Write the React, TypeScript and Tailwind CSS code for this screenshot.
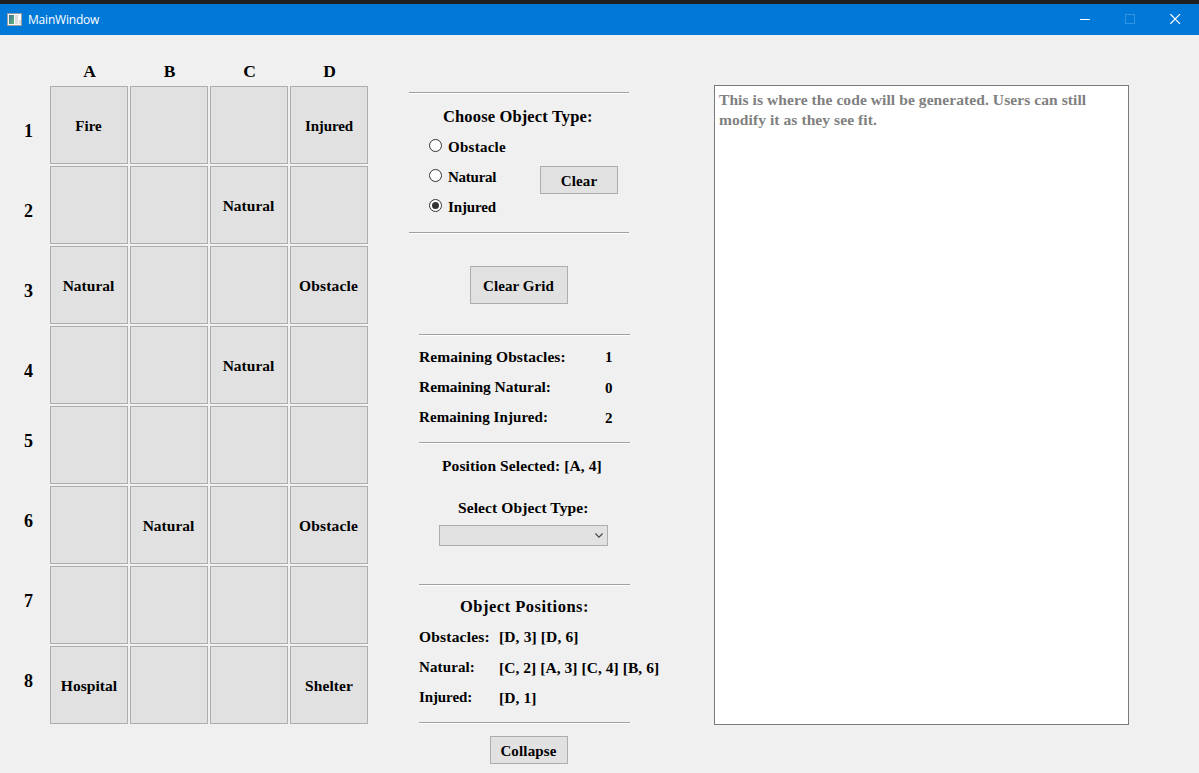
import React from "react";

const COLUMNS = ["A", "B", "C", "D"];

type Cell = { text: string; style: string } | null;

const fire: Cell = { text: "Fire", style: "pr-px text-[15px]" };
const injured: Cell = { text: "Injured", style: "text-[15px] tracking-[-0.1px]" };
const natural: Cell = { text: "Natural", style: "pr-px text-[15.5px]" };
const obstacle: Cell = { text: "Obstacle", style: "pr-px text-[15.5px] tracking-[0.15px]" };
const hospital: Cell = { text: "Hospital", style: "text-[15.5px] tracking-[0.06px]" };
const shelter: Cell = { text: "Shelter", style: "text-[15.5px] tracking-[0.06px]" };

const GRID: Cell[][] = [
  [fire, null, null, injured],
  [null, null, natural, null],
  [natural, null, null, obstacle],
  [null, null, natural, null],
  [null, null, null, null],
  [null, natural, null, obstacle],
  [null, null, null, null],
  [hospital, null, null, shelter],
];

function Divider({ className }: { className: string }) {
  return <div className={`h-[2px] shrink-0 border-t border-[#a0a0a0] bg-white ${className}`} />;
}

function Button({ className, children }: { className: string; children?: React.ReactNode }) {
  return (
    <button
      className={`flex shrink-0 items-center justify-center whitespace-nowrap border border-[#adadad] bg-[#e1e1e1] font-bold ${className}`}
    >
      {children}
    </button>
  );
}

function Radio({ label, checked, tracking }: { label: string; checked?: boolean; tracking: string }) {
  return (
    <label className="flex h-[30px] items-start pl-[20px]">
      <svg className="mt-[7px] shrink-0" width="13" height="13" viewBox="0 0 13 13">
        <circle cx="6.5" cy="6.5" r="6" fill="#fff" stroke="#333" />
        {checked && <circle cx="6.5" cy="6.5" r="3.5" fill="#333" />}
      </svg>
      <span className={`ml-[6px] mt-[5px] ${tracking}`}>{label}</span>
    </label>
  );
}

function Count({ label, value, style, shift }: { label: string; value: number; style: string; shift: string }) {
  return (
    <div className="flex h-[30px] items-start pt-[5px]">
      <span className={`w-[186px] ${style}`}>{label}</span>
      <span className={shift}>{value}</span>
    </div>
  );
}

function Positions({ label, value, style, valueClass }: { label: string; value: string; style: string; valueClass: string }) {
  return (
    <div className="flex h-[30px] items-start whitespace-nowrap pt-[5px]">
      <span className={`w-[80px] shrink-0 ${style}`}>{label}</span>
      <span className={valueClass}>{value}</span>
    </div>
  );
}

function TitleBar() {
  return (
    <header className="flex h-[35px] shrink-0 items-center border-t-4 border-[#202020] bg-[#0078d7] text-white">
      <svg className="mb-px ml-[7px]" width="15" height="13" viewBox="0 0 15 13">
        <defs>
          <linearGradient id="pane" x1="0" y1="0" x2="1" y2="1">
            <stop offset="0" stopColor="#3b7398" />
            <stop offset="1" stopColor="#63b573" />
          </linearGradient>
        </defs>
        <rect width="15" height="13" fill="#9aa0a2" />
        <rect x="1" y="1" width="13" height="11" fill="#f4f4f4" />
        <rect x="2" y="2" width="5" height="9" fill="url(#pane)" />
        <rect x="8" y="2" width="3" height="9" fill="#dedede" />
        <rect x="12" y="2" width="2" height="5" fill="#fff" />
        <rect x="12" y="7" width="2" height="4" fill="#dcdcdc" />
      </svg>
      <span className="ml-[6px] font-['Open_Sans','Noto_Sans',sans-serif] text-[12px] font-normal leading-[16px] tracking-[-0.2px]">
        MainWindow
      </span>
      <div className="mb-px ml-auto mr-[18px] flex gap-[35px]">
        <svg width="10" height="10" viewBox="0 0 10 10" shapeRendering="crispEdges">
          <path d="M0 5.5H10" stroke="#fff" />
        </svg>
        <svg width="10" height="10" viewBox="0 0 10 10">
          <rect x="0.5" y="0.5" width="9" height="9" fill="none" stroke="#3393df" />
        </svg>
        <svg width="11" height="10" viewBox="0 0 11 10">
          <path d="M0.4 0.2L10 9.8M10 0.2L0.4 9.8" stroke="#fff" strokeWidth="1.2" />
        </svg>
      </div>
    </header>
  );
}

function Board() {
  return (
    <section className="w-[368px] shrink-0 pt-[26px]">
      <div className="flex h-[25px] gap-[2px] pl-[50px] text-[17.5px] leading-[20px]">
        {COLUMNS.map((name) => (
          <div key={name} className="w-[78px] pl-px text-center">
            {name}
          </div>
        ))}
      </div>
      <div className="flex flex-col gap-[2px]">
        {GRID.map((row, r) => (
          <div key={r} className="flex h-[78px] gap-[2px]">
            <div
              className={`w-[48px] pl-[24px] text-[18px] leading-[20px] ${r < 4 ? "pt-[35px]" : "pt-[25px]"}`}
            >
              {r + 1}
            </div>
            {row.map((cell, c) => (
              <Button key={c} className={`h-[78px] w-[78px] pt-px ${cell ? cell.style : ""}`}>
                {cell ? cell.text : null}
              </Button>
            ))}
          </div>
        ))}
      </div>
    </section>
  );
}

function Controls() {
  return (
    <section className="ml-[41px] flex w-[305px] shrink-0 flex-col pt-[57px]">
      <Divider className="w-[220px]" />
      <div className="h-[138px] pt-[8px]">
        <h2 className="h-[30px] pl-[34px] pt-[5px] text-[16.5px] leading-[20px] tracking-[0.14px]">
          Choose Object Type:
        </h2>
        <div className="flex">
          <div className="w-[131px]">
            <Radio label="Obstacle" tracking="tracking-[0.26px]" />
            <Radio label="Natural" tracking="tracking-[-0.25px]" />
            <Radio label="Injured" checked tracking="tracking-[-0.15px]" />
          </div>
          <Button className="mt-[34px] h-[28px] w-[78px] pt-[2px] tracking-[0.1px]">Clear</Button>
        </div>
      </div>
      <Divider className="w-[220px]" />

      <Button className="ml-[61px] mt-[32px] h-[38px] w-[98px] pr-px pt-[2px] tracking-[0.08px]">Clear Grid</Button>

      <div className="ml-[10px] mt-[30px]">
        <Divider className="w-[211px]" />
        <div className="h-[106px] pt-[6px]">
          <Count label="Remaining Obstacles:" value={1} style="text-[15.5px] tracking-[0.08px]" shift="" />
          <Count label="Remaining Natural:" value={0} style="text-[15.5px] tracking-[-0.06px]" shift="pt-px" />
          <Count label="Remaining Injured:" value={2} style="text-[15px] tracking-[0.08px]" shift="pt-px" />
        </div>
        <Divider className="w-[211px]" />
        <div className="h-[140px] pt-[12px]">
          <div className="h-[42px] pl-[23px] text-[15.5px] tracking-[0.09px]">Position Selected: [A, 4]</div>
          <div className="h-[27px] pl-[39px] text-[15.5px] tracking-[0.1px]">Select Object Type:</div>
          <div className="ml-[20px] flex h-[21px] w-[169px] items-center justify-end border border-[#adadad] bg-[#e1e1e1] pr-[4px]">
            <svg width="8" height="5" viewBox="0 0 8 5">
              <path d="M0.4 0.5L4 4.1L7.6 0.5" fill="none" stroke="#444" strokeWidth="1.1" />
            </svg>
          </div>
        </div>
        <Divider className="w-[211px]" />
        <div className="h-[136px] pt-[6px]">
          <h2 className="h-[30px] pl-[41px] pt-[5px] text-[16.5px] leading-[20px] tracking-[0.5px]">
            Object Positions:
          </h2>
          <Positions
            label="Obstacles:"
            value="[D, 3] [D, 6]"
            style="text-[15.5px] tracking-[0.2px]"
            valueClass="text-[15.5px] tracking-[0.13px]"
          />
          <Positions
            label="Natural:"
            value="[C, 2] [A, 3] [C, 4] [B, 6]"
            style="tracking-[0.12px]"
            valueClass="pt-px text-[15.5px] tracking-[0.05px]"
          />
          <Positions
            label="Injured:"
            value="[D, 1]"
            style="tracking-[-0.1px]"
            valueClass="pt-px text-[15.5px] tracking-[0.1px]"
          />
        </div>
        <Divider className="w-[211px]" />
      </div>
      <Button className="ml-[81px] mt-[12px] h-[28px] w-[78px] pr-px pt-[2px] tracking-[0.15px]">Collapse</Button>
    </section>
  );
}

export default function App() {
  return (
    <div className="flex h-[773px] w-[1199px] flex-col overflow-hidden bg-[#f0f0f0] font-['Liberation_Serif',serif] text-[15px] font-bold leading-[20px] text-black">
      <TitleBar />
      <main className="flex flex-1">
        <Board />
        <Controls />
        <section className="mt-[50px] h-[640px] w-[415px] shrink-0 border border-[#7a7a7a] bg-white pl-[4px] pt-[4px] text-[#808080]">
          <p className="whitespace-nowrap text-[15.5px] tracking-[0.08px]">
            This is where the code will be generated. Users can still
            <br />
            modify it as they see fit.
          </p>
        </section>
      </main>
    </div>
  );
}
